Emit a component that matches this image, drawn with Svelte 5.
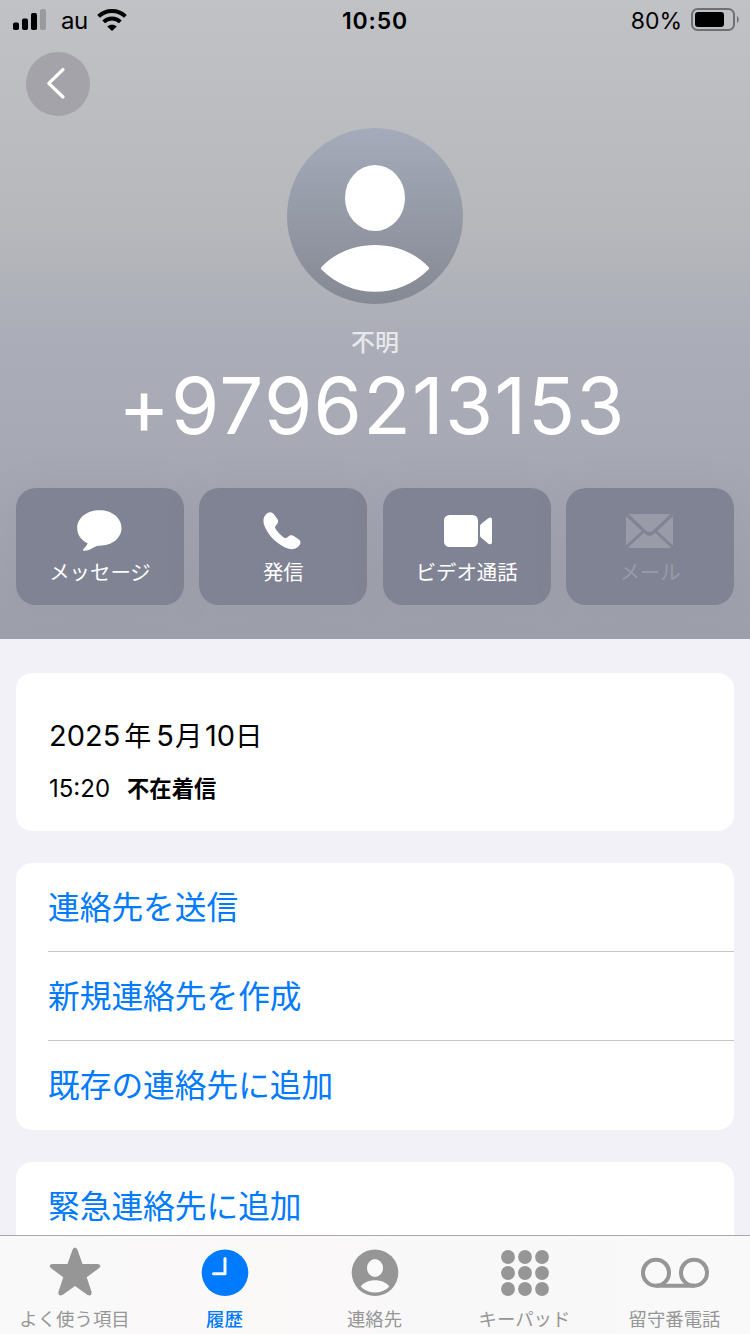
<script lang="ts">
  const phone = '+9796213153';

  const actions = [
    { id: 'message', label: 'メッセージ', disabled: false },
    { id: 'call', label: '発信', disabled: false },
    { id: 'video', label: 'ビデオ通話', disabled: false },
    { id: 'mail', label: 'メール', disabled: true },
  ];

  const contactLinks = ['連絡先を送信', '新規連絡先を作成', '既存の連絡先に追加'];

  const tabs = [
    { id: 'favorites', label: 'よく使う項目' },
    { id: 'recents', label: '履歴' },
    { id: 'contacts', label: '連絡先' },
    { id: 'keypad', label: 'キーパッド' },
    { id: 'voicemail', label: '留守番電話' },
  ];

  let activeTab = $state('recents');
</script>

<main class="screen">
  <header class="hero">
    <div class="status">
      <div class="status-left">
        <svg class="signal" viewBox="0 0 34 22" width="34" height="22">
          <rect x="0" y="13.5" width="6" height="7.5" rx="1.8" />
          <rect x="9" y="9.5" width="6" height="11.5" rx="1.8" />
          <rect x="18" y="4" width="6" height="17" rx="1.8" />
          <rect x="27" y="0" width="6" height="21" rx="1.8" opacity="0.2" />
        </svg>
        <span class="carrier">au</span>
        <svg class="wifi" viewBox="0 0 30 22" width="30" height="22">
          <path d="M1.6 7.4C9.2 .2 20.8 .2 28.4 7.4" fill="none" stroke="#000" stroke-width="4" />
          <path d="M6.7 12.9C11.4 8.400 18.6 8.400 23.3 12.9" fill="none" stroke="#000" stroke-width="4" />
          <path d="M10.2 17.5C12.9 15.1 17.1 15.1 19.8 17.5L15 22Z" />
        </svg>
      </div>
      <span class="clock">10:50</span>
      <div class="status-right">
        <span class="percent">80%</span>
        <svg viewBox="0 0 49 24" width="49" height="24">
          <rect x="1" y="1" width="42" height="21" rx="5.5" fill="none" stroke="#000" stroke-opacity="0.42" stroke-width="2" />
          <rect x="4" y="4" width="29" height="15" rx="3" />
          <path d="M46 8c2.3 1.3 2.3 5.700 0 7z" opacity="0.42" />
        </svg>
      </div>
    </div>

    <button class="back" aria-label="戻る">
      <svg viewBox="0 0 64 64" width="64" height="64">
        <path d="M37 17.500L22.800 31.300L37 45" fill="none" stroke="#fff" stroke-width="3.200" stroke-linecap="round" stroke-linejoin="round" />
      </svg>
    </button>

    <svg class="avatar" viewBox="0 0 176 176" width="176" height="176">
      <defs>
        <linearGradient id="avatar-fill" x1="0" y1="0" x2="0" y2="1">
          <stop offset="0" stop-color="#a5abba" />
          <stop offset="1" stop-color="#858993" />
        </linearGradient>
      </defs>
      <circle cx="88" cy="88" r="88" fill="url(#avatar-fill)" />
      <ellipse cx="88" cy="70" rx="30" ry="33" fill="#fff" />
      <path d="M34.500 139C62 109.500 114 109.500 141.500 139Q142.500 140.200 141.500 141.500C112 171.200 64 171.200 34.500 141.500Q33.500 140.200 34.500 139Z" fill="#fff" />
    </svg>

    <p class="name">不明</p>
    <h1 class="number">{phone}</h1>

    <div class="actions">
      {#each actions as a (a.id)}
        <button class="action" disabled={a.disabled}>
          <svg viewBox="0 0 56 46" width="56" height="46" fill="currentColor">
            {#if a.id === 'message'}
              <path d="M27.500 2.200C40 2.200 49.500 9.800 49.500 20S40 37.700 27.500 37.700C25.500 37.700 24 38.200 22.500 39C19 41 15.500 42.800 12.300 42.800C11 42.800 10.500 41.700 11.500 40.700C13.300 39 15 37.500 15.600 35.300C9 32 5.200 26.700 5.200 20C5.200 9.800 15 2.200 27.500 2.200Z" />
            {:else if a.id === 'call'}
              <path d="M10.700 6.700C14 3.300 17.100 3.500 19.400 6.900L22.100 10.600C23.700 13 23.500 14.500 21.700 16.500C20.200 18.200 19.600 19 20.400 20.600C22.400 24 25.800 27.500 29 29.700C30.600 30.700 31.500 30 33.300 28.600C35.400 26.900 37 26.900 39.500 28.500L43.200 31.100C46.200 33.300 46.200 35.800 43.300 38.500C39.500 42 34.700 42 28.700 38.700C20.700 34.500 14 27.700 10.400 20C7.800 14.500 7.700 10.200 10.700 6.700Z" />
            {:else if a.id === 'video'}
              <rect x="5" y="7" width="34" height="32" rx="5.500" />
              <path d="M41 18.500Q41 17 42 16L49.300 10.200Q53 8.300 53 12V34Q53 37.500 49.300 35.700L42 29.600Q41 28.700 41 27Z" />
            {:else}
              <path d="M6.700 6H48.300L31.500 22.200Q27.500 25.700 23.500 22.200Z" />
              <path d="M4 8.200L19.800 23.100L4 37.600Z" />
              <path d="M51 8.200V37.600L35.200 23.100Z" />
              <path d="M21.800 24.800Q27.500 31 33.200 24.800L48.900 39.500Q48.200 40 47.200 40H7.800Q6.800 40 6.100 39.500Z" />
            {/if}
          </svg>
          <span>{a.label}</span>
        </button>
      {/each}
    </div>
  </header>

  <section class="content">
    <div class="card log">
      <p class="date">2025<span class="year">年</span>5<span class="month">月</span>10<span class="day">日</span></p>
      <p class="entry"><span class="time">15:20</span><strong>不在着信</strong></p>
    </div>

    <div class="card list">
      {#each contactLinks as link}
        <a href="#contact" class="row">{link}</a>
      {/each}
    </div>

    <div class="card list">
      <a href="#emergency" class="row">緊急連絡先に追加</a>
    </div>
  </section>

  <nav class="tabbar">
    {#each tabs as t (t.id)}
      <button class="tab" class:active={activeTab === t.id} onclick={() => (activeTab = t.id)}>
        <svg viewBox="0 0 70 52" width="70" height="52" fill="currentColor">
          {#if t.id === 'favorites'}
            <path d="M32.600 3.500Q35 -.5 37.400 3.500L42.500 17.900H57.700Q62.300 18.600 58.900 22.200L46.700 31.300L51.600 46Q51.900 50.600 47.600 49L35 40L22.400 49Q18.100 50.600 18.400 46L23.300 31.300L11.100 22.200Q7.700 18.600 12.300 17.900H27.500Z" />
          {:else if t.id === 'recents'}
            <circle cx="35" cy="26.700" r="23.300" />
            <path d="M35 12.500V27.700H23.500" fill="none" stroke="#fafafa" stroke-width="3" stroke-linecap="round" stroke-linejoin="round" />
          {:else if t.id === 'contacts'}
            <circle cx="35" cy="26.700" r="23.300" />
            <ellipse cx="35" cy="22" rx="8" ry="9" fill="#fafafa" />
            <path d="M20.600 40.500C27 32.300 43 32.300 49.400 40.500C41.500 48.500 28.500 48.500 20.600 40.500Z" fill="#fafafa" />
          {:else if t.id === 'keypad'}
            {#each [11, 27, 43] as cy}
              {#each [18, 35, 52] as cx}
                <circle {cx} {cy} r="6.900" />
              {/each}
            {/each}
          {:else}
            <g fill="none" stroke="currentColor" stroke-width="4">
              <circle cx="16" cy="26.700" r="13" />
              <circle cx="54" cy="26.700" r="13" />
              <path d="M16 39.700H54" />
            </g>
          {/if}
        </svg>
        <span>{t.label}</span>
      </button>
    {/each}
  </nav>
</main>

<style>
  :global(body) { margin: 0; }
  .screen { width: 750px; height: 1334px; display: flex; flex-direction: column; overflow: hidden; background: #f2f1f7; color: #000; font-family: Inter, 'Noto Sans CJK JP', sans-serif; }
  p, h1 { margin: 0; font-weight: 400; }
  svg { display: block; flex: none; }
  button { border: none; padding: 0; background: none; font-family: inherit; cursor: pointer; }

  .hero { flex: none; height: 639px; display: flex; flex-direction: column; align-items: center; background: linear-gradient(180deg, #c1c2c6 0%, #b7b8bc 35%, #abaeb8 52%, #a6a8b4 72%, #9d9faa 100%); }

  .status { width: 100%; height: 40px; box-sizing: border-box; padding: 0 10px 0 13px; display: grid; grid-template-columns: 1fr auto 1fr; align-items: center; line-height: 40px; }
  .status-left { display: flex; align-items: center; }
  .carrier { margin-left: 14px; padding-top: 2px; line-height: 38px; font-size: 24px; letter-spacing: -0.5px; }
  .wifi { margin-left: 9px; }
  .clock { padding: 2px 3px 0 0; line-height: 38px; font-size: 23px; font-weight: 600; letter-spacing: 0.8px; }
  .status-right { display: flex; align-items: center; justify-content: flex-end; }
  .percent { padding-top: 2px; line-height: 38px; font-size: 23px; margin-right: 9px; }

  .back { align-self: flex-start; margin: 12px 0 0 26px; width: 64px; height: 64px; border-radius: 50%; background: #a3a3a9; }
  .avatar { margin-top: 12px; }
  .name { margin-top: 23px; height: 31px; line-height: 32px; font-size: 24px; font-weight: 500; color: #e7e8eb; }
  .number { padding-right: 6px; height: 96px; line-height: 96px; font-size: 78px; color: #fff; letter-spacing: 1.3px; white-space: nowrap; }

  .actions { margin-top: 34px; width: 718px; display: flex; justify-content: space-between; }
  .action { width: 168px; height: 117px; box-sizing: border-box; padding-top: 20px; border-radius: 20px; background: #808393; color: #fff; display: flex; flex-direction: column; align-items: center; box-shadow: 0 0 32px rgb(128 131 147 / 0.15); }
  .action span { margin-top: 5px; font-size: 20.400px; line-height: 28px; }
  .action:disabled { color: #999ba8; cursor: default; }

  .content { flex: 1; min-height: 0; overflow: hidden; padding: 34px 16px 0; display: flex; flex-direction: column; gap: 32px; }
  .card { flex: none; background: #fff; border-radius: 16px; }
  .log { height: 158px; box-sizing: border-box; padding: 42px 33px 0; }
  .date { height: 42px; line-height: 42px; font-size: 29px; }
  .date span { font-size: 27.500px; }
  .date .year { margin: 0 5px 0 4px; font-size: 27px; }
  .date .month { margin: 0 2.500px 0 1px; }
  .entry { margin-top: 16px; height: 32px; line-height: 32px; font-size: 24px; display: flex; }
  .entry strong { margin-left: 17px; font-size: 22.300px; font-weight: 700; }
  .list { padding-bottom: 1px; }
  .row { display: block; height: 86px; padding-top: 2px; line-height: 86px; margin-left: 32px; font-size: 31.700px; color: #007aff; text-decoration: none; }
  .row + .row { border-top: 1px solid #c6c6c8; }

  .tabbar { flex: none; height: 99px; box-sizing: border-box; border-top: 1px solid #a9a9ab; background: linear-gradient(90deg, #f9f9f9, #fbf8f8 35%, #f8f8f9 65%, #f9f9f9); display: flex; }
  .tab { width: 150px; padding: 10px 1px 0 0; color: #969696; display: flex; flex-direction: column; align-items: center; }
  .tab span { margin-top: 7px; font-size: 18.400px; line-height: 28px; white-space: nowrap; }
  .tab.active { color: #007aff; }
  .tab.active span { font-weight: 500; }
</style>
